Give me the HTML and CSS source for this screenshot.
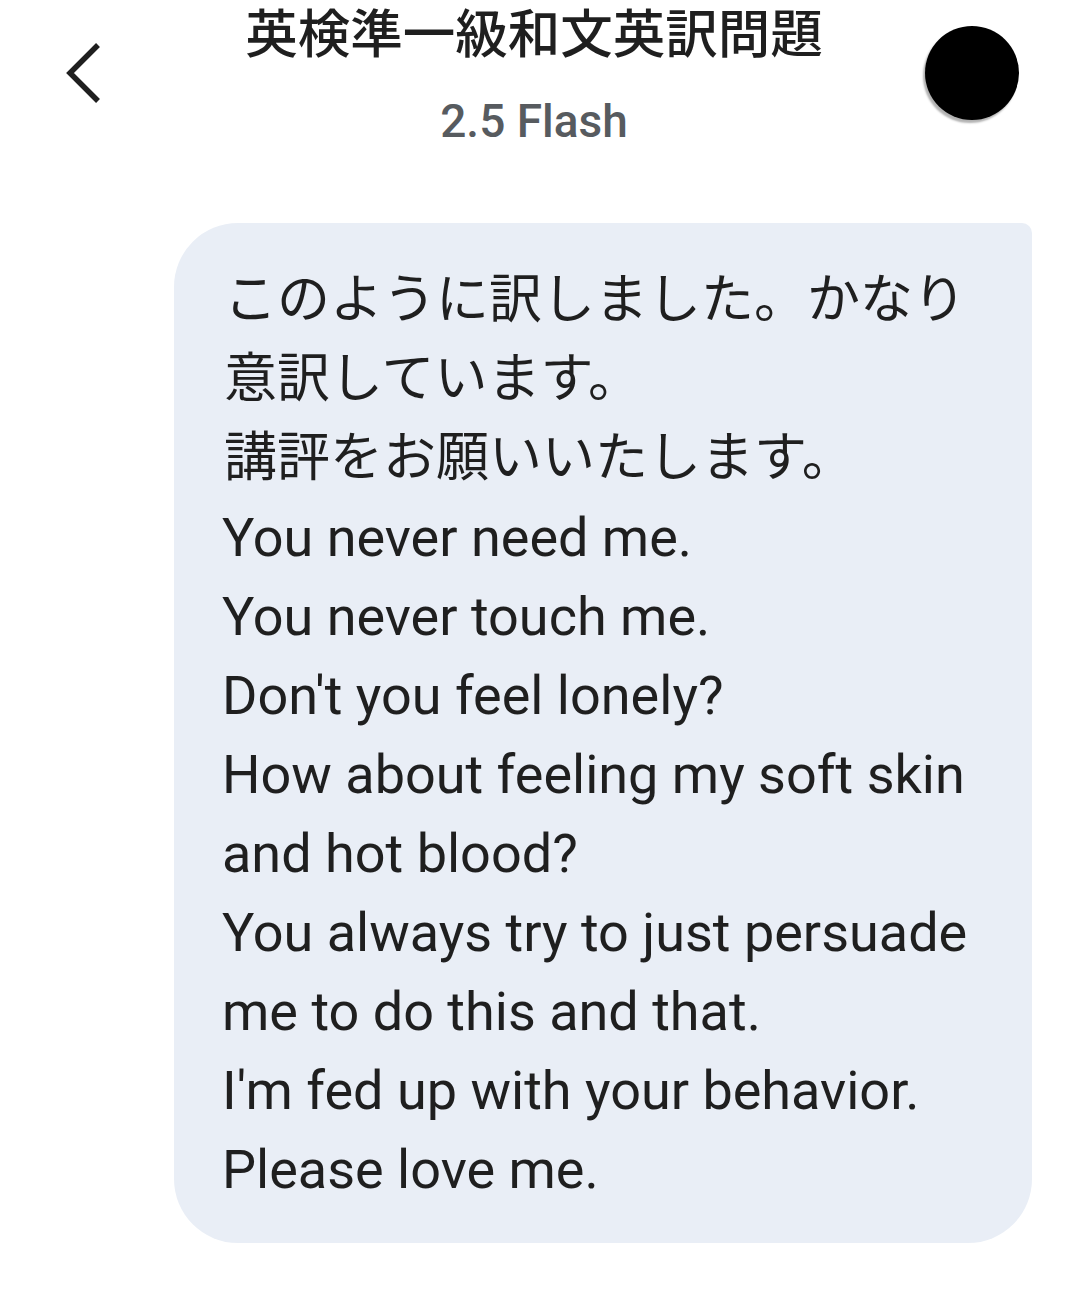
FILE: index.html
```html
<!DOCTYPE html>
<html lang="ja">
<head>
<meta charset="utf-8">
<link rel="stylesheet" href="styles.css">
</head>
<body>
<header class="header">
  <div class="back">
    <svg class="chev" width="40" height="64" viewBox="0 0 40 64"><polyline points="34,3 6,31 34,59" fill="none" stroke="#1f1f1f" stroke-width="5.5"/></svg>
  </div>
  <div class="titles">
    <div class="title">英検準一級和文英訳問題</div>
    <div class="sub">2.5 Flash</div>
  </div>
  <div class="right">
    <div class="avatar"></div>
  </div>
</header>
<main class="chat">
  <div class="bubble">
    <div class="ln">このように訳しました。かなり</div>
    <div class="ln">意訳しています。</div>
    <div class="ln">講評をお願いいたします。</div>
    <div class="ln en">You never need me.</div>
    <div class="ln en">You never touch me.</div>
    <div class="ln en">Don't you feel lonely?</div>
    <div class="ln en">How about feeling my soft skin</div>
    <div class="ln en">and hot blood?</div>
    <div class="ln en">You always try to just persuade</div>
    <div class="ln en">me to do this and that.</div>
    <div class="ln en">I'm fed up with your behavior.</div>
    <div class="ln en">Please love me.</div>
  </div>
</main>
</body>
</html>
```
FILE: styles.css
```css
html, body {
  margin: 0;
  padding: 0;
  background: #ffffff;
}
body {
  width: 1080px;
  height: 1307px;
  overflow: hidden;
  font-family: Roboto, "Noto Sans CJK JP", sans-serif;
  color: #1f1f1f;
}
.header {
  display: grid;
  grid-template-columns: 148px 1fr 160px;
  height: 223px;
}
.back {
  padding-left: 64px;
  padding-top: 42px;
}
.chev {
  display: block;
}
.titles {
  display: flex;
  flex-direction: column;
  align-items: center;
}
.title {
  font-family: "Noto Sans CJK JP", sans-serif;
  font-size: 52.5px;
  font-weight: 500;
  line-height: 60px;
  margin-top: 0;
  white-space: nowrap;
  color: #1f1f1f;
}
.sub {
  font-size: 46px;
  font-weight: 500;
  line-height: 60px;
  margin-top: 31px;
  color: #575b5f;
}
.right {
  padding-top: 26px;
  padding-left: 5px;
}
.avatar {
  width: 94px;
  height: 94px;
  border-radius: 50%;
  background: #000;
  box-shadow: -2px 3px 2px rgba(0, 0, 0, 0.3);
}
.chat {
  display: flex;
  justify-content: flex-end;
  padding-right: 48px;
}
.bubble {
  width: 858px;
  box-sizing: border-box;
  background: #e9eef6;
  border-radius: 64px 10px 64px 64px;
  padding: 38px 20px 34px 48px;
  font-size: 53px;
  line-height: 79px;
}
.ln {
  white-space: nowrap;
  padding-left: 2px;
}
.en {
  font-size: 54px;
  padding-left: 0;
}
```
